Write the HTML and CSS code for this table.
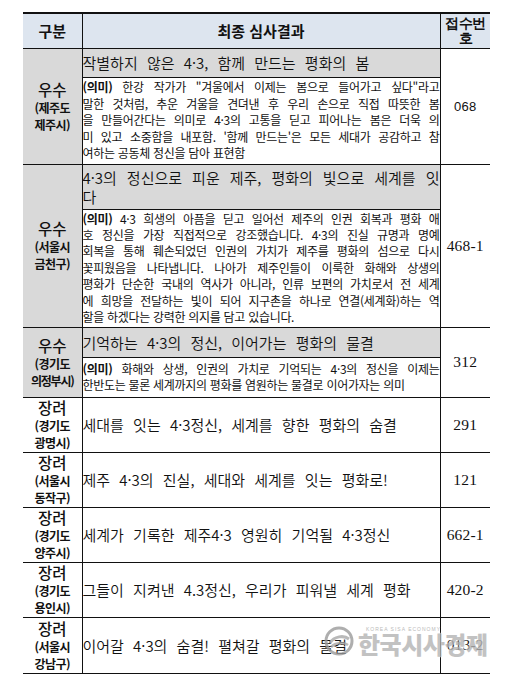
FILE: index.html
```html
<!DOCTYPE html>
<html lang="ko">
<head>
<meta charset="utf-8">
<title>최종 심사결과</title>
<link rel="stylesheet" href="styles.css">
</head>
<body>
<div class="page">
<table class="result">
  <colgroup><col class="c-grade"><col class="c-main"><col class="c-no"></colgroup>
  <thead>
    <tr class="h-row">
      <th class="grade">구분</th>
      <th class="main-h">최종 심사결과</th>
      <th class="no no-h">접수번<br>호</th>
    </tr>
  </thead>
  <tbody>
    <tr class="r1t">
      <td class="grade shade" rowspan="2"><span class="g">우수</span><span class="reg">(제주도</span><span class="reg">제주시)</span></td>
      <td class="title shade">작별하지 않은 4·3, 함께 만드는 평화의 봄</td>
      <td class="no sans" rowspan="2">068</td>
    </tr>
    <tr class="r1d">
      <td class="desc">
        <span class="ln"><b>(의미)</b> 한강 작가가 "겨울에서 이제는 봄으로 들어가고 싶다"라고</span>
        <span class="ln">말한 것처럼, 추운 겨울을 견뎌낸 후 우리 손으로 직접 따뜻한 봄</span>
        <span class="ln">을 만들어간다는 의미로 4·3의 고통을 딛고 피어나는 봄은 더욱 의</span>
        <span class="ln">미 있고 소중함을 내포함. '함께 만드는'은 모든 세대가 공감하고 참</span>
        <span class="ln end">여하는 공동체 정신을 담아 표현함</span>
      </td>
    </tr>
    <tr class="r2t">
      <td class="grade shade" rowspan="2"><span class="g">우수</span><span class="reg">(서울시</span><span class="reg">금천구)</span></td>
      <td class="title shade">
        <span class="ln">4·3의 정신으로 피운 제주, 평화의 빛으로 세계를 잇</span>
        <span class="ln end">다</span>
      </td>
      <td class="no" rowspan="2">468-1</td>
    </tr>
    <tr class="r2d">
      <td class="desc">
        <span class="ln"><b>(의미)</b> 4·3 희생의 아픔을 딛고 일어선 제주의 인권 회복과 평화 애</span>
        <span class="ln">호 정신을 가장 직접적으로 강조했습니다. 4·3의 진실 규명과 명예</span>
        <span class="ln">회복을 통해 훼손되었던 인권의 가치가 제주를 평화의 섬으로 다시</span>
        <span class="ln">꽃피웠음을 나타냅니다. 나아가 제주인들이 이룩한 화해와 상생의</span>
        <span class="ln">평화가 단순한 국내의 역사가 아니라, 인류 보편의 가치로서 전 세계</span>
        <span class="ln">에 희망을 전달하는 빛이 되어 지구촌을 하나로 연결(세계화)하는 역</span>
        <span class="ln end">할을 하겠다는 강력한 의지를 담고 있습니다.</span>
      </td>
    </tr>
    <tr class="r3t">
      <td class="grade shade" rowspan="2"><span class="g">우수</span><span class="reg">(경기도</span><span class="reg narrow">의정부시)</span></td>
      <td class="title shade">기억하는 4·3의 정신, 이어가는 평화의 물결</td>
      <td class="no" rowspan="2">312</td>
    </tr>
    <tr class="r3d">
      <td class="desc">
        <span class="ln"><b>(의미)</b> 화해와 상생, 인권의 가치로 기억되는 4·3의 정신을 이제는</span>
        <span class="ln end">한반도는 물론 세계까지의 평화를 염원하는 물결로 이어가자는 의미</span>
      </td>
    </tr>
    <tr class="r-s">
      <td class="grade"><span class="g">장려</span><span class="reg">(경기도</span><span class="reg">광명시)</span></td>
      <td class="title">세대를 잇는 4·3정신, 세계를 향한 평화의 숨결</td>
      <td class="no">291</td>
    </tr>
    <tr class="r-s">
      <td class="grade"><span class="g">장려</span><span class="reg">(서울시</span><span class="reg">동작구)</span></td>
      <td class="title">제주 4·3의 진실, 세대와 세계를 잇는 평화로!</td>
      <td class="no">121</td>
    </tr>
    <tr class="r-s">
      <td class="grade"><span class="g">장려</span><span class="reg">(경기도</span><span class="reg">양주시)</span></td>
      <td class="title">세계가 기록한 제주4·3 영원히 기억될 4·3정신</td>
      <td class="no">662-1</td>
    </tr>
    <tr class="r-s">
      <td class="grade"><span class="g">장려</span><span class="reg">(경기도</span><span class="reg">용인시)</span></td>
      <td class="title">그들이 지켜낸 4.3정신, 우리가 피워낼 세계 평화</td>
      <td class="no">420-2</td>
    </tr>
    <tr class="r-s r-last">
      <td class="grade"><span class="g">장려</span><span class="reg">(서울시</span><span class="reg">강남구)</span></td>
      <td class="title">이어갈 4·3의 숨결! 펼쳐갈 평화의 물결</td>
      <td class="no">013-2</td>
    </tr>
  </tbody>
</table>

<div class="watermark">
  <svg class="wm-logo" width="30" height="30" viewBox="0 0 30 30">
    <circle cx="15" cy="15" r="13" fill="none" stroke="#9a9a9a" stroke-width="3"/>
    <path d="M6 17 C10 10, 20 9, 25 13" fill="none" stroke="#a8a8a8" stroke-width="3"/>
    <path d="M7 21 C12 16, 20 16, 24 19" fill="none" stroke="#a8a8a8" stroke-width="2.5"/>
  </svg>
  <div class="wm-text">
    <span class="wm-small">KOREA SISA ECONOMY</span>
    <span class="wm-big">한국시사경제</span>
  </div>
</div>
</div>
</body>
</html>
```

FILE: styles.css
```css
* { box-sizing: border-box; }

body {
  margin: 0;
  background: #fff;
  color: #111;
  font-family: "Noto Sans CJK KR", "Noto Sans", sans-serif;
}

.page {
  position: relative;
  width: 510px;
  height: 683px;
  padding: 12px 0 0 23px;
}

.result {
  border-collapse: collapse;
  table-layout: fixed;
  width: 467px;
}

.c-grade { width: 59px; }
.c-main { width: 358px; }
.c-no { width: 50px; }

.result th,
.result td {
  border: 1px solid #111;
  padding: 0;
  vertical-align: middle;
}

.result .grade { border-left: none; }
.result .no { border-right: none; }

/* header */
.h-row { height: 35px; }
.h-row th {
  background: #dde5ef;
  border-top: 2px solid #111;
  font-weight: 700;
  font-size: 15px;
  line-height: 18px;
  text-align: center;
}

.h-row .no-h {
  font-size: 14px;
  line-height: 15px;
  letter-spacing: -0.8px;
  white-space: nowrap;
}

.r-last td { border-bottom: 1.5px solid #111; }

/* row heights */
.r1t { height: 29px; }
.r1d { height: 87px; }
.r2t { height: 45px; }
.r2d { height: 118px; }
.r3t { height: 30px; }
.r3d { height: 40px; }
.r-s { height: 55px; }
.r-last { height: 56px; }

.shade { background: #d9d9d9; }

/* grade column */
.grade { text-align: center; }
.grade span { display: block; }
.grade .g {
  font-size: 15.5px;
  font-weight: 500;
  line-height: 19px;
}
.grade .reg {
  font-size: 12px;
  font-weight: 700;
  line-height: 17px;
  letter-spacing: -0.5px;
  white-space: nowrap;
}
.grade .reg.narrow { letter-spacing: -1.2px; }

/* title */
.title {
  padding: 0 3px 0 3px;
  font-size: 15px;
  font-weight: 350;
  line-height: 19px;
  word-spacing: 5px;
  text-align: left;
}

/* description */
.desc {
  padding: 1px 3px 1px 2px;
  font-size: 12px;
  line-height: 16.4px;
  letter-spacing: -0.3px;
}

.ln {
  display: block;
  text-align: justify;
  text-align-last: justify;
  word-spacing: 0;
}
.ln.end { text-align-last: left; }
.desc b { font-weight: 700; }

/* number column */
.no {
  text-align: center;
  font-family: "Liberation Serif", "DejaVu Serif", serif;
  font-size: 15.5px;
  letter-spacing: 0.2px;
}
.no.sans {
  font-family: "Liberation Sans", "DejaVu Sans", sans-serif;
  font-size: 13px;
}

/* watermark overlay */
.watermark {
  position: absolute;
  left: 324px;
  top: 626px;
  display: flex;
  align-items: center;
  gap: 4px;
  opacity: 0.8;
  pointer-events: none;
}
.wm-text {
  display: flex;
  flex-direction: column;
  line-height: 1;
}
.wm-small {
  font-family: "Liberation Sans", sans-serif;
  font-size: 5px;
  color: #aaa;
  letter-spacing: 1px;
  padding-left: 8px;
}
.wm-big {
  font-family: "Noto Sans CJK KR", sans-serif;
  font-weight: 900;
  font-size: 24px;
  color: #b4b4b4;
  letter-spacing: -0.5px;
  text-shadow: 0 0 1px #fff, 0 0 2px #fff;
}
```
